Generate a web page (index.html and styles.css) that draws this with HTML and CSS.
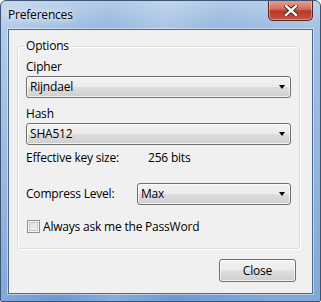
FILE: index.html
```html
<!DOCTYPE html>
<html lang="en">
<head>
    <meta charset="UTF-8">
    <title>Preferences</title>
    <link rel="stylesheet" href="styles.css">
</head>
<body>

<div class="window">
    <div class="titlebar">
        <span class="title">Preferences</span>
        <button class="close-x" aria-label="Close">
            <svg width="14" height="11" viewBox="0 0 14 11">
                <path d="M2 1 L12 10 M12 1 L2 10" stroke="#3b1a16" stroke-width="4.2" stroke-linecap="square"/>
                <path d="M2 1 L12 10 M12 1 L2 10" stroke="#fff" stroke-width="2.4" stroke-linecap="square"/>
            </svg>
        </button>
    </div>

    <div class="client">
        <fieldset class="group">
            <legend>Options</legend>

            <div class="label">Cipher</div>
            <div class="combo full"><span>Rijndael</span><i class="arrow"></i></div>

            <div class="label second">Hash</div>
            <div class="combo full"><span>SHA512</span><i class="arrow"></i></div>

            <div class="keysize">
                <span class="key-label">Effective key size:</span>
                <span>256 bits</span>
            </div>

            <div class="row">
                <span class="key-label">Compress Level:</span>
                <div class="combo short"><span>Max</span><i class="arrow"></i></div>
            </div>

            <label class="check-row">
                <span class="checkbox"></span>
                <span class="check-text">Always ask me the PassWord</span>
            </label>
        </fieldset>

        <div class="buttons">
            <button class="btn">Close</button>
        </div>
    </div>
</div>

</body>
</html>
```

FILE: styles.css
```css
body {
    margin: 0;
    font-family: 'Segoe UI', 'Open Sans', 'Noto Sans', sans-serif;
    font-size: 12px;
    letter-spacing: -0.2px;
    color: #000;
    background: #fff;
}
.window {
    width: 321px;
    height: 302px;
    box-sizing: border-box;
    border: 1px solid #3c5575;
    border-radius: 6px 6px 2px 2px;
    background:
        linear-gradient(100deg, rgba(255,255,255,0.3) 0%, rgba(255,255,255,0) 30%, rgba(255,255,255,0.2) 45%, rgba(255,255,255,0) 60%, rgba(255,255,255,0.15) 85%),
        linear-gradient(180deg, #b2cbe8 0%, #93b6de 10%, #7ea6d6 60%, #6d98cf 100%);
    display: flex;
    flex-direction: column;
    overflow: hidden;
}
.titlebar {
    height: 28px;
    display: flex;
    align-items: flex-start;
}
.title {
    margin: 6px 0 0 7px;
    line-height: 16px;
    text-shadow: 0 0 6px #fff, 0 0 10px rgba(255,255,255,0.9);
}
.close-x {
    margin: -1px 7px 0 auto;
    width: 45px;
    height: 21px;
    padding: 0;
    border: 1px solid #5a2620;
    border-top: none;
    border-radius: 0 0 5px 5px;
    background: linear-gradient(180deg, #e8a393 0%, #d0705c 45%, #b9382a 55%, #c95240 100%);
    box-shadow: inset 0 0 0 1px rgba(255,255,255,0.35);
    display: flex;
    align-items: center;
    justify-content: center;
}
.client {
    margin: 0 7px 7px 7px;
    flex: 1;
    border: 1px solid #4c6a8e;
    background: #f0f0f0;
    box-shadow: 0 0 0 1px rgba(255,255,255,0.45);
    padding: 0 0 0 8px;
}
.group {
    width: 262px;
    margin: 8px 0 0 0;
    padding: 5px 8px 13px 8px;
    border: 1px solid #d5dfe5;
    border-radius: 3px;
    box-shadow: inset 1px 1px 0 #fff, 1px 1px 0 #fff;
}
.group legend {
    padding: 0 2px;
    margin-left: -2px;
    line-height: 16px;
}
.label {
    line-height: 16px;
}
.label.second {
    margin-top: 8px;
}
.combo {
    box-sizing: border-box;
    height: 22px;
    margin-top: 1px;
    border: 1px solid #707070;
    border-radius: 3px;
    background: linear-gradient(180deg, #f2f2f2 0%, #ebebeb 48%, #dddddd 52%, #cfcfcf 100%);
    box-shadow: inset 0 0 0 1px rgba(255,255,255,0.7);
    display: flex;
    align-items: center;
    padding: 0 4px 0 3px;
}
.combo span {
    flex: 1;
    line-height: 16px;
}
.combo.full {
    width: 265px;
}
.combo.short {
    width: 154px;
    margin-top: 0;
}
.arrow {
    width: 0;
    height: 0;
    border-left: 3.5px solid transparent;
    border-right: 3.5px solid transparent;
    border-top: 4px solid #000;
    margin-right: 1px;
}
.keysize {
    margin-top: 5px;
    line-height: 16px;
    display: flex;
}
.keysize .key-label {
    width: 122px;
}
.row {
    margin-top: 17px;
    display: flex;
    align-items: center;
}
.row .key-label {
    width: 111px;
    line-height: 16px;
}
.check-row {
    margin-top: 12px;
    display: flex;
    align-items: center;
    gap: 3px;
    line-height: 16px;
}
.checkbox {
    box-sizing: border-box;
    width: 13px;
    height: 13px;
    margin-left: 1px;
    border: 1px solid #8e8f8f;
    background: linear-gradient(135deg, #dcdcdc 0%, #f2f2f2 100%);
    box-shadow: inset 0 0 0 1px #f4f4f4, inset 0 0 0 2px #c9c9c9;
}
.check-text {
    padding-top: 2px;
}
.buttons {
    display: flex;
    justify-content: flex-end;
    width: 279px;
    margin-top: 10px;
}
.btn {
    box-sizing: border-box;
    width: 77px;
    height: 23px;
    font-family: inherit;
    font-size: 12px;
    letter-spacing: inherit;
    color: #000;
    border: 1px solid #707070;
    border-radius: 3px;
    background: linear-gradient(180deg, #f2f2f2 0%, #ebebeb 48%, #dddddd 52%, #cfcfcf 100%);
    box-shadow: inset 0 0 0 1px rgba(255,255,255,0.7);
    padding: 0;
}
```
